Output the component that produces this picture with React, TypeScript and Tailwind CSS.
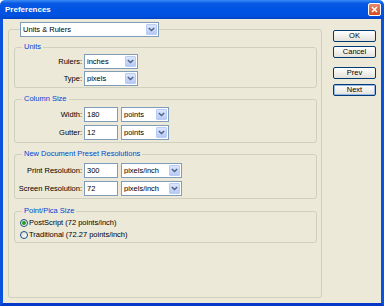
import type { ReactNode } from 'react';

function Arrow() {
	return (
		<span className="m-px flex h-[11px] w-[11px] shrink-0 items-center justify-center rounded-[1px] border border-[#B9CCF5] bg-linear-to-b from-[#DCE6FD] to-[#B7CAF5]">
			<svg width="7" height="5" viewBox="0 0 7 5">
				<path d="M0.8 1l2.7 2.6L6.2 1" stroke="#4D6185" strokeWidth="1.4" fill="none" />
			</svg>
		</span>
	);
}

function Select({ value, className }: { value: string; className: string }) {
	return (
		<div className={`flex h-[15px] items-center border border-[#7F9DB9] bg-white ${className}`}>
			<span className="flex-1 truncate pl-[2px] leading-none">{value}</span>
			<Arrow />
		</div>
	);
}

function TextBox({ value }: { value: string }) {
	return (
		<div className="flex h-[15px] w-[34px] items-center border border-[#7F9DB9] bg-white pl-[2px] leading-none">
			{value}
		</div>
	);
}

function Row({ label, children }: { label: string; children: ReactNode }) {
	return (
		<div className="flex items-center gap-[2px]">
			<span className="w-[67px] text-right leading-none">{label}</span>
			{children}
		</div>
	);
}

function Group({ title, className, children }: { title: string; className: string; children: ReactNode }) {
	return (
		<fieldset className={`ml-[5px] mr-[4px] rounded-[3px] border border-[#D0D0BF] ${className}`}>
			<legend className="ml-[7px] h-[10px] px-[2px] leading-[10px] text-[#0046D5]">{title}</legend>
			{children}
		</fieldset>
	);
}

function Radio({ label, checked }: { label: string; checked?: boolean }) {
	return (
		<div className="flex h-[12px] items-center gap-[1px] pl-[5px]">
			<span className="flex h-[8px] w-[8px] items-center justify-center rounded-full border border-[#1C5180] bg-linear-to-br from-[#DCDBD5] to-white">
				{checked && <span className="h-[4px] w-[4px] rounded-full bg-[#21A121]" />}
			</span>
			<span className="leading-none">{label}</span>
		</div>
	);
}

function Btn({ label, className }: { label: string; className: string }) {
	return (
		<button
			type="button"
			className={`h-[12px] w-full rounded-[2px] border border-[#003C74] bg-linear-to-b from-white to-[#E3E2DA] text-center leading-none text-black ${className}`}
		>
			{label}
		</button>
	);
}

export default function App() {
	return (
		<div className="flex h-[306px] w-[384px] flex-col font-[family-name:'Liberation_Sans',Arial,sans-serif] text-[7.5px] text-black">
			{/* title bar */}
			<div className="flex h-[19px] shrink-0 items-center justify-between rounded-t-[5px] bg-[linear-gradient(to_bottom,#3A8CF5_0%,#0858E4_18%,#0054E3_50%,#0051DE_85%,#0042C6_100%)] pl-[5px]">
				<span className="text-[8px] font-bold text-white">Preferences</span>
				<span className="mr-[3px] flex h-[13px] w-[13px] items-center justify-center rounded-[2px] border border-white bg-linear-to-b from-[#E88A6A] to-[#D4471C]">
					<svg width="7" height="7" viewBox="0 0 7 7">
						<path d="M1 1l5 5M6 1L1 6" stroke="white" strokeWidth="1.5" />
					</svg>
				</span>
			</div>

			{/* body */}
			<div className="flex flex-1 border-x-[3px] border-b-[3px] border-x-[#0A53DC] border-b-[#0838C8] bg-[#ECE9D8]">
				<fieldset className="mb-[5px] ml-[5px] mt-[3px] w-[314px] rounded-[3px] border border-[#D0D0BF]">
					<legend className="ml-[11px]">
						<Select value="Units & Rulers" className="w-[139px]" />
					</legend>

					<Group title="Units" className="mt-[5px] pb-[1px]">
						<div className="mt-[2px] flex flex-col gap-[2px]">
							<Row label="Rulers:">
								<Select value="inches" className="w-[54px]" />
							</Row>
							<Row label="Type:">
								<Select value="pixels" className="w-[54px]" />
							</Row>
						</div>
					</Group>

					<Group title="Column Size" className="mt-[6px] pb-[2px]">
						<div className="mt-[3px] flex flex-col gap-[3px]">
							<Row label="Width:">
								<TextBox value="180" />
								<Select value="points" className="ml-[1px] w-[48px]" />
							</Row>
							<Row label="Gutter:">
								<TextBox value="12" />
								<Select value="points" className="ml-[1px] w-[48px]" />
							</Row>
						</div>
					</Group>

					<Group title="New Document Preset Resolutions" className="mt-[6px] pb-[2px]">
						<div className="mt-[4px] flex flex-col gap-[3px]">
							<Row label="Print Resolution:">
								<TextBox value="300" />
								<Select value="pixels/inch" className="ml-[1px] w-[61px]" />
							</Row>
							<Row label="Screen Resolution:">
								<TextBox value="72" />
								<Select value="pixels/inch" className="ml-[1px] w-[61px]" />
							</Row>
						</div>
					</Group>

					<Group title="Point/Pica Size" className="mt-[7px] pb-[1px]">
						<div className="mt-[1px] flex flex-col">
							<Radio label="PostScript (72 points/inch)" checked />
							<Radio label="Traditional (72.27 points/inch)" />
						</div>
					</Group>
				</fieldset>

				<div className="ml-[11px] mr-[5px] mt-[11px] flex w-[43px] flex-col">
					<Btn label="OK" className="" />
					<Btn label="Cancel" className="mt-[4px]" />
					<Btn label="Prev" className="mt-[9px]" />
					<Btn label="Next" className="mt-[5px] shadow-[inset_0_0_0_1px_#98B8EA]" />
				</div>
			</div>
		</div>
	);
}
